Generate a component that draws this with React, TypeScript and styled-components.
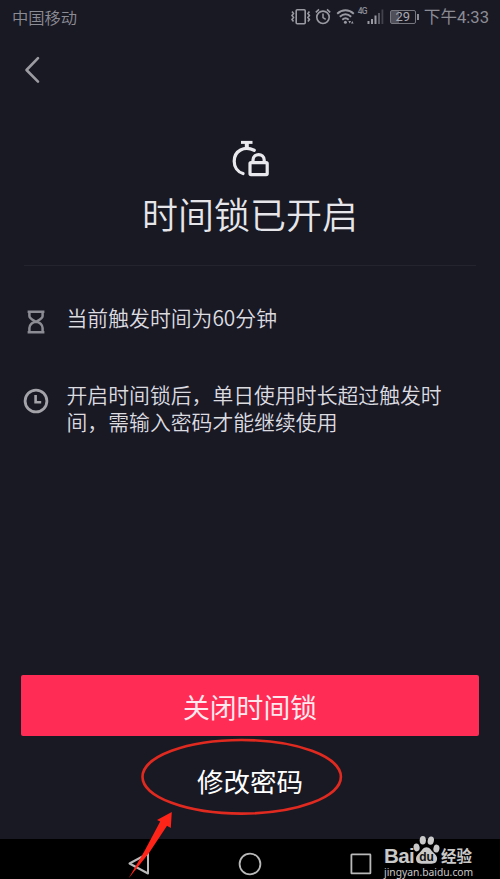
import type { ReactNode } from "react";
import styled, { createGlobalStyle } from "styled-components";

const GlobalStyle = createGlobalStyle`
  * {
    box-sizing: border-box;
  }

  body {
    margin: 0;
    background: #191924;
  }
`;

interface TipProps {
  icon: ReactNode;
  text: string;
}

function Tip({ icon, text }: TipProps) {
  return (
    <TipRow>
      <TipIcon>{icon}</TipIcon>
      <TipText>{text}</TipText>
    </TipRow>
  );
}

function VibrateIcon() {
  return (
    <svg width="20" height="18" viewBox="0 0 20 18" fill="none" stroke="#9a9aa2">
      <rect x="5.2" y="1.7" width="9" height="14" rx="1" strokeWidth="1.6" />
      <path
        d="M1 3.6l1.5 2-1.5 2 1.5 2-1.5 2 1.5 2M18.4 3.6l-1.5 2 1.5 2-1.5 2 1.5 2-1.5 2"
        strokeWidth="1.6"
      />
    </svg>
  );
}

function AlarmIcon() {
  return (
    <svg width="16" height="18" viewBox="0 0 16 18" fill="none" stroke="#9a9aa2">
      <circle cx="8" cy="9.3" r="6.2" strokeWidth="1.6" />
      <path d="M8 5.6v4l2.7 1.8" strokeWidth="1.5" />
      <path d="M0.8 4.3l3.2-2.9M15.2 4.3L12 1.4" strokeWidth="1.6" />
    </svg>
  );
}

function WifiIcon() {
  return (
    <svg width="19" height="18" viewBox="0 0 19 18" fill="none" stroke="#9a9aa2">
      <path
        d="M1.2 5.7c5-4.6 11.6-4.6 16.6 0M3.8 8.8c3.5-3.2 7.9-3.2 11.4 0M6.3 11.8c2-1.8 4.4-1.8 6.4 0"
        strokeWidth="1.9"
      />
      <circle cx="9.4" cy="14.3" r="1.5" fill="#9a9aa2" stroke="none" />
      <path d="M12.3 13l1.4 2.6 1.4-2.6zM15 15.6l1.3-2.6 1.3 2.6z" fill="#9a9aa2" stroke="none" />
    </svg>
  );
}

function SignalIcon() {
  return (
    <svg width="17" height="18" viewBox="0 0 17 18" fill="#9a9aa2">
      <rect x="0.5" y="13" width="2" height="3" />
      <rect x="4" y="11" width="2" height="5" />
      <rect x="7.5" y="7.5" width="2" height="8.5" />
      <rect x="11" y="5" width="2" height="11" fill="#5b5b65" />
      <rect x="14.5" y="1.5" width="1.8" height="14.5" fill="#42424d" />
    </svg>
  );
}

function TimeLockIcon() {
  return (
    <svg width="40" height="38" viewBox="0 0 40 38" fill="none" stroke="#e9e9ed">
      <path d="M11 2.4h11.5" strokeWidth="3" />
      <path d="M16.8 3v5" strokeWidth="4" />
      <path
        d="M24.2 10.3C14.5 5.5 4.2 10.6 4.2 21.2c0 5.8 3.2 10.7 8.8 12.3"
        strokeWidth="3.2"
        strokeLinecap="round"
      />
      <rect x="20" y="22.6" width="17.2" height="12" rx="1" strokeWidth="3.2" />
      <path d="M23 22.6v-2.5c0-7.2 11.2-7.2 11.2 0v2.5" strokeWidth="3.2" />
    </svg>
  );
}

function HourglassIcon() {
  return (
    <svg width="18" height="24" viewBox="0 0 18 24" fill="none" stroke="#8c8c94" strokeWidth="2.5">
      <path d="M0.6 1.7h16.8M0.6 22.3h16.8" />
      <path d="M2.4 2v4c0 2.8 3.8 4 6.6 5.8C11.8 10 15.6 8.8 15.6 6V2M2.4 22v-4c0-2.8 2.8-6.2 6.6-6.2s6.6 3.4 6.6 6.2v4" />
    </svg>
  );
}

function ClockIcon() {
  return (
    <svg width="26" height="28" viewBox="0 -2 26 28" fill="none" stroke="#a3a3a9">
      <circle cx="13" cy="13" r="10.9" strokeWidth="2.8" />
      <path d="M12.6 7v7.2h5.6" strokeWidth="2.6" />
    </svg>
  );
}

function PawLogo() {
  return (
    <svg width="27" height="30" viewBox="0 0 27 30" fill="#c9c9c9">
      <ellipse cx="3.6" cy="12.4" rx="3" ry="4" transform="rotate(-12 3.6 12.4)" />
      <ellipse cx="9.8" cy="5.3" rx="3.1" ry="4.3" />
      <ellipse cx="17.8" cy="5.6" rx="3.1" ry="4.2" transform="rotate(12 17.8 5.6)" />
      <ellipse cx="23.4" cy="13.6" rx="3" ry="4" transform="rotate(12 23.4 13.6)" />
      <path d="M13.5 12.2c3.2 0 4.6 3 6.6 5 2.2 2 4 3.6 4 6.4 0 3.4-2.2 5.2-5.2 5.2H8.3c-3.2 0-5.3-1.8-5.3-5.2 0-2.8 2-4.4 4-6.4 2-2 3.3-5 6.5-5z" />
      <text
        x="13.6"
        y="26.3"
        fill="#111"
        fontFamily="Liberation Sans, sans-serif"
        fontSize="12"
        fontWeight="bold"
        textAnchor="middle"
      >
        du
      </text>
    </svg>
  );
}

export default function App() {
  return (
    <>
      <GlobalStyle />
      <Screen>
        <StatusBar>
          <span>中国移动</span>
          <StatusIcons>
            <VibrateIcon />
            <AlarmIcon />
            <WifiIcon />
            <Network>4G</Network>
            <SignalIcon />
            <Battery>29</Battery>
            <Time>下午4:33</Time>
          </StatusIcons>
        </StatusBar>
        <Header>
          <svg width="16" height="28" viewBox="0 0 16 28" fill="none">
            <path
              d="M14 2.2L2.5 14 14 25.6"
              stroke="#9b9ba1"
              strokeWidth="2.6"
              strokeLinecap="round"
              strokeLinejoin="round"
            />
          </svg>
        </Header>
        <Hero>
          <TimeLockIcon />
          <Title>时间锁已开启</Title>
        </Hero>
        <Tips>
          <Tip icon={<HourglassIcon />} text="当前触发时间为60分钟" />
          <Tip
            icon={<ClockIcon />}
            text="开启时间锁后，单日使用时长超过触发时间，需输入密码才能继续使用"
          />
        </Tips>
        <Actions>
          <CloseButton>关闭时间锁</CloseButton>
          <ChangeButton>修改密码</ChangeButton>
        </Actions>
        <NavBar>
          <svg width="24" height="26" viewBox="0 0 24 26" fill="none" stroke="#b9b9b9">
            <path d="M21 2.5v20L2.5 12.5z" strokeWidth="2" strokeLinejoin="round" />
          </svg>
          <svg width="26" height="26" viewBox="1 0 26 26" fill="none" stroke="#b9b9b9">
            <circle cx="13" cy="13" r="10.4" strokeWidth="1.8" />
          </svg>
          <svg width="22" height="22" viewBox="0 0 22 22" fill="none" stroke="#b9b9b9">
            <rect x="1.4" y="1.4" width="19" height="19" rx="0.5" strokeWidth="1.8" />
          </svg>
        </NavBar>
        <Watermark>
          <Brand>
            <b>Bai</b>
            <PawLogo />
            <span>经验</span>
          </Brand>
          <Site>jingyan.baidu.com</Site>
        </Watermark>
        <Marks width="500" height="879" viewBox="0 0 500 879">
          <ellipse cx="241.7" cy="776.8" rx="99.2" ry="36.8" fill="none" stroke="#e02a20" strokeWidth="2.6" />
          <path d="M128.5 878.5L144.5 851L160.2 821.5L157 820L171.8 812L170.8 828L167 825.8L149 853Z" fill="#ff2418" />
        </Marks>
      </Screen>
    </>
  );
}

const Screen = styled.main`
  position: relative;
  display: flex;
  flex-direction: column;
  width: 500px;
  height: 879px;
  overflow: hidden;
  background: #191924;
  color: #dcdce0;
  font-family: "Noto Sans CJK SC", sans-serif;

  svg {
    display: block;
    flex-shrink: 0;
  }
`;

const StatusBar = styled.header`
  display: flex;
  justify-content: space-between;
  align-items: center;
  height: 34px;
  padding: 0 11px 0 12px;
  color: #8c8c95;
  font-size: 16.3px;
  font-weight: 350;
  line-height: 34px;
`;

const StatusIcons = styled.div`
  display: flex;
  align-items: center;

  svg + svg {
    margin-left: 4.5px;
  }
`;

const Network = styled.span`
  align-self: flex-start;
  margin: 9px 0 0 3px;
  width: 9px;
  font-family: "Roboto", sans-serif;
  font-size: 8.5px;
  font-weight: 500;
  line-height: 9px;
  letter-spacing: -0.8px;
`;

const Battery = styled.div`
  position: relative;
  width: 26px;
  height: 14px;
  margin: 0 8px 0 6px;
  border: 1px solid #777780;
  border-radius: 2px;
  background: linear-gradient(90deg, #4f4f59 8px, transparent 8px);
  color: #a8a8b0;
  font-family: "Roboto", sans-serif;
  font-size: 13px;
  font-weight: 400;
  line-height: 12px;
  text-align: center;

  &::after {
    content: "";
    position: absolute;
    top: 3px;
    right: -4px;
    width: 2px;
    height: 6px;
    background: #8c8c95;
  }
`;

const Time = styled.span`
  padding-top: 2px;
  font-family: "Roboto", "Noto Sans CJK SC", sans-serif;
  font-size: 16.6px;
  font-weight: 400;
  line-height: 36px;
`;

const Header = styled.div`
  height: 106px;
  padding: 22px 24px;
`;

const Hero = styled.section`
  display: flex;
  flex-direction: column;
  align-items: center;
  height: 126px;
  margin: 0 24px;
  border-bottom: 1px solid #24242e;
`;

const Title = styled.h1`
  margin: 9px 0 0;
  color: #e6e6ea;
  font-size: 36px;
  font-weight: 350;
  line-height: 52px;
`;

const Tips = styled.section`
  display: flex;
  flex-direction: column;
  gap: 47px;
  padding: 38px 50px 0 23px;
`;

const TipRow = styled.div`
  display: flex;
`;

const TipIcon = styled.div`
  display: flex;
  justify-content: center;
  flex-shrink: 0;
  width: 26px;
  margin: 5.5px 17.5px 0 0;
`;

const TipText = styled.p`
  margin: 0;
  font-size: 20.85px;
  font-weight: 350;
  line-height: 27.5px;
`;

const Actions = styled.section`
  display: flex;
  flex-direction: column;
  margin-top: auto;
  padding: 0 21px;
  height: 164px;
`;

const CloseButton = styled.button`
  height: 61px;
  padding: 0;
  border: 0;
  border-radius: 2px;
  background: #ff2c55;
  color: #ffe9ee;
  font-family: inherit;
  font-size: 26.8px;
  line-height: 63px;
`;

const ChangeButton = styled(CloseButton)`
  margin-top: 14px;
  background: none;
  color: #fff;
  font-size: 26.5px;
  line-height: 61px;
`;

const NavBar = styled.nav`
  display: flex;
  justify-content: space-between;
  align-items: center;
  height: 40px;
  padding: 9px 128px 0 127px;
  background: #000;
`;

const Watermark = styled.div`
  position: absolute;
  left: 384px;
  top: 835px;
  width: 90px;
  color: #c9c9c9;
`;

const Brand = styled.div`
  display: flex;
  align-items: flex-end;
  height: 30px;

  b {
    width: 29px;
    font-family: "Liberation Sans", sans-serif;
    font-size: 20.5px;
    line-height: 18px;
    letter-spacing: -0.6px;
  }

  span {
    margin-left: 1px;
    font-size: 15.5px;
    font-weight: 700;
    line-height: 19px;
    white-space: nowrap;
  }
`;

const Site = styled.div`
  margin-top: 1px;
  font-family: "Noto Sans", sans-serif;
  font-size: 10.3px;
  line-height: 12px;
  white-space: nowrap;
`;

const Marks = styled.svg`
  position: absolute;
  inset: 0;
  pointer-events: none;
`;
